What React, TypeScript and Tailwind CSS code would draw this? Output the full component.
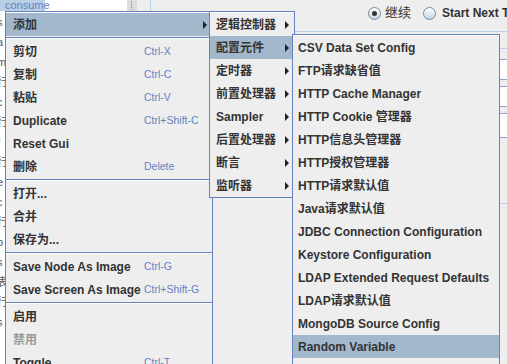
import React from "react"

type Item = {
    label: string
    accel?: string
    sub?: boolean
    active?: boolean
    disabled?: boolean
    sep?: boolean
}

const font = { fontFamily: '"Liberation Sans", "Noto Sans CJK SC", Arial, sans-serif' }

const mainItems: Item[] = [
    { label: "添加", sub: true, active: true },
    { label: "", sep: true },
    { label: "剪切", accel: "Ctrl-X" },
    { label: "复制", accel: "Ctrl-C" },
    { label: "粘贴", accel: "Ctrl-V" },
    { label: "Duplicate", accel: "Ctrl+Shift-C" },
    { label: "Reset Gui" },
    { label: "删除", accel: "Delete" },
    { label: "", sep: true },
    { label: "打开..." },
    { label: "合并" },
    { label: "保存为..." },
    { label: "", sep: true },
    { label: "Save Node As Image", accel: "Ctrl-G" },
    { label: "Save Screen As Image", accel: "Ctrl+Shift-G" },
    { label: "", sep: true },
    { label: "启用" },
    { label: "禁用", disabled: true },
    { label: "Toggle", accel: "Ctrl-T" },
    { label: "帮助" },
]

const addItems: Item[] = [
    { label: "逻辑控制器", sub: true },
    { label: "配置元件", sub: true, active: true },
    { label: "定时器", sub: true },
    { label: "前置处理器", sub: true },
    { label: "Sampler", sub: true },
    { label: "后置处理器", sub: true },
    { label: "断言", sub: true },
    { label: "监听器", sub: true },
]

const configItems: Item[] = [
    { label: "CSV Data Set Config" },
    { label: "FTP请求缺省值" },
    { label: "HTTP Cache Manager" },
    { label: "HTTP Cookie 管理器" },
    { label: "HTTP信息头管理器" },
    { label: "HTTP授权管理器" },
    { label: "HTTP请求默认值" },
    { label: "Java请求默认值" },
    { label: "JDBC Connection Configuration" },
    { label: "Keystore Configuration" },
    { label: "LDAP Extended Request Defaults" },
    { label: "LDAP请求默认值" },
    { label: "MongoDB Source Config" },
    { label: "Random Variable", active: true },
    { label: "Simple Config Element" },
]

function Arrow() {
    return (
        <svg width="4" height="8" viewBox="0 0 4 8" className="shrink-0">
            <path d="M0 0 L4 4 L0 8 Z" fill="#222" />
        </svg>
    )
}

function Menu({ items, pad, labelW, className }: { items: Item[]; pad: string; labelW?: string; className: string }) {
    return (
        <div className={"absolute flex flex-col border border-[#6382bf] bg-[#eeeeee] " + className}>
            <div className="h-px bg-white" />
            {items.map((it, i) =>
                it.sep ? (
                    <div key={i} className="flex h-[4px] flex-col pt-px">
                        <div className="h-px bg-[#6382bf]" />
                        <div className="h-px bg-white" />
                    </div>
                ) : (
                    <div
                        key={i}
                        className={
                            "flex h-[23px] shrink-0 items-center pr-[5px] " +
                            pad +
                            (it.active ? " bg-[#a3b8cc]" : "")
                        }
                    >
                        <span
                            className={
                                "shrink-0 whitespace-nowrap text-[12px] font-bold " +
                                (labelW ?? "") +
                                (it.disabled ? " text-[#999999]" : " text-[#333333]")
                            }
                        >
                            {it.label}
                        </span>
                        {it.accel && (
                            <span className="whitespace-nowrap text-[10.5px] text-[#6382bf]">{it.accel}</span>
                        )}
                        <span className="flex-1" />
                        {it.sub && <Arrow />}
                    </div>
                )
            )}
        </div>
    )
}

function Radio({ checked }: { checked?: boolean }) {
    return (
        <span className="flex h-[13px] w-[13px] shrink-0 items-center justify-center rounded-full border border-[#7a8a99] bg-gradient-to-b from-white to-[#c4d5e6]">
            {checked && <span className="h-[5px] w-[5px] rounded-full bg-[#333333]" />}
        </span>
    )
}

const treeRows = ["s", "a", "m", "行", "c", "行", "f", "行", "e", "c", "行", "p", "s", "表", "行", "s"]

export default function App() {
    return (
        <div className="relative h-[364px] w-[507px] overflow-hidden bg-[#eeeeee]" style={font}>
            <div className="flex h-full">
                {/* tree panel */}
                <div className="flex h-full w-[127px] shrink-0 flex-col bg-white">
                    <div className="flex h-[11px] w-[45px] items-end bg-[#b8cfe5] pl-[5px] text-[11px] leading-[11px] text-[#6382bf]">
                        consume
                    </div>
                    {treeRows.map((t, i) => (
                        <div key={i} className="h-[20px] pt-[6px] text-[11px] leading-[11px] text-[#555]">
                            <span className="-ml-[3px]">{t}</span>
                        </div>
                    ))}
                </div>
                {/* splitter */}
                <div className="flex h-full w-[10px] shrink-0 justify-center bg-[#dddddd] pt-[1px]">
                    <div className="h-[9px] w-[2px] border-l border-dotted border-[#888]" />
                </div>
                <div className="w-[13px] shrink-0" />
                <div className="h-full w-px shrink-0 bg-[#b8cfe5]" />
                {/* right panel */}
                <div className="flex min-w-0 flex-1 flex-col">
                    <div className="flex h-[25px] shrink-0 items-center whitespace-nowrap pl-[217px] pt-[1px] text-[12px] text-[#333333]">
                        <Radio checked />
                        <span className="ml-[4px] mr-[12px] shrink-0 text-[13px]">继续</span>
                        <Radio />
                        <span className="ml-[6px] shrink-0 font-bold">Start Next Thread Loop</span>
                    </div>
                    <div className="h-[6px] shrink-0" />
                    <div className="h-px shrink-0 bg-[#b8cfe5]" />
                    <div className="flex flex-1 justify-end">
                        <div className="flex w-[8px] flex-col">
                            <div className="h-[16px]" />
                            <div className="h-px bg-[#b8cfe5]" />
                            <div className="h-[10px]" />
                            <div className="h-[21px] border-y border-[#8da6c4] bg-white" />
                            <div className="h-[6px]" />
                            <div className="h-[21px] border-y border-[#8da6c4] bg-white" />
                            <div className="h-[6px]" />
                            <div className="h-[25px] border-y border-[#8da6c4] bg-white" />
                            <div className="h-[65px]" />
                            <div className="h-px bg-[#b8cfe5]" />
                        </div>
                    </div>
                </div>
            </div>

            <Menu items={mainItems} pad="pl-[7px]" labelW="w-[131px]" className="left-[5px] top-[11px] w-[208px]" />
            <Menu items={addItems} pad="pl-[6px]" className="left-[209px] top-[11px] w-[86px]" />
            <Menu items={configItems} pad="pl-[5px]" className="left-[292px] top-[34px] w-[208px]" />
        </div>
    )
}
